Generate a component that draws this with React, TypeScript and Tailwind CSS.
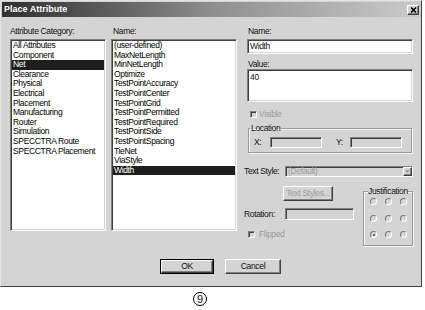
import React from 'react';

const categories = [
  'All Attributes',
  'Component',
  'Net',
  'Clearance',
  'Physical',
  'Electrical',
  'Placement',
  'Manufacturing',
  'Router',
  'Simulation',
  'SPECCTRA Route',
  'SPECCTRA Placement',
];

const attrNames = [
  '(user-defined)',
  'MaxNetLength',
  'MinNetLength',
  'Optimize',
  'TestPointAccuracy',
  'TestPointCenter',
  'TestPointGrid',
  'TestPointPermitted',
  'TestPointRequired',
  'TestPointSide',
  'TestPointSpacing',
  'TieNet',
  'ViaStyle',
  'Width',
];

// sunken / raised win9x edges
const sunken =
  'border border-t-[#808080] border-l-[#808080] border-b-white border-r-white shadow-[inset_1px_1px_0_#404040,inset_-1px_-1px_0_#d4d4d4]';
const raised =
  'border border-t-white border-l-white border-b-[#404040] border-r-[#404040] shadow-[inset_-1px_-1px_0_#808080]';

function ListBox({ items, selected, className }: { items: string[]; selected: string; className: string }) {
  return (
    <div className={`bg-white pt-[1px] px-[1px] ${sunken} ${className}`}>
      {items.map((it) => (
        <div
          key={it}
          className={`h-[9.6px] leading-[9.6px] pl-[1px] whitespace-nowrap ${it === selected ? 'bg-[#1e1e1e] text-white' : 'text-black'}`}
        >
          {it}
        </div>
      ))}
    </div>
  );
}

function CheckBox() {
  return <div className={`w-[7px] h-[7px] bg-[#d4d4d4] ${sunken}`} />;
}

function Radio({ checked }: { checked?: boolean }) {
  return (
    <div className="w-[7px] h-[7px] rounded-full border border-t-[#7a7a7a] border-l-[#7a7a7a] border-b-white border-r-white bg-[#d6d6d6] flex items-center justify-center">
      {checked && <div className="w-[2px] h-[2px] rounded-full bg-[#555]" />}
    </div>
  );
}

export default function App() {
  return (
    <div className="w-[425px] h-[310px] bg-white font-['Liberation_Sans',Arial,sans-serif] text-[8.5px] tracking-[-0.35px] text-[#111] overflow-hidden">
      <div className="w-[422px] h-[287px] bg-[#d4d4d4] border border-t-[#e4e4e4] border-l-[#e4e4e4] border-b-[#404040] border-r-[#404040] flex flex-col">
        {/* title bar */}
        <div className="mx-[1px] mt-[1px] h-[15px] bg-linear-to-r from-[#303030] via-[#8e8e8e] to-[#cbcbcb] flex items-center justify-between pl-[2px] pr-[1px]">
          <span className="text-white font-bold text-[9px] tracking-normal leading-none">Place Attribute</span>
          <div className={`w-[12px] h-[10px] bg-[#d4d4d4] flex items-center justify-center ${raised}`}>
            <svg width="7" height="6" viewBox="0 0 7 6">
              <path d="M1 0.5 L6 5.5 M6 0.5 L1 5.5" stroke="#000" strokeWidth="1.6" />
            </svg>
          </div>
        </div>

        {/* body */}
        <div className="flex pl-[9px] pt-[9px]">
          <div className="w-[96px] flex flex-col">
            <div className="h-[10px] leading-[10px]">Attribute Category:</div>
            <ListBox items={categories} selected="Net" className="mt-[3px] h-[192px]" />
          </div>

          <div className="ml-[5px] w-[126px] flex flex-col">
            <div className="h-[10px] leading-[10px] pl-[2px]">Name:</div>
            <ListBox items={attrNames} selected="Width" className="mt-[3px] h-[192px]" />
          </div>

          <div className="ml-[7px] w-[170px] flex flex-col">
            <div className="h-[10px] leading-[10px] pl-[4px]">Name:</div>
            <div className={`ml-[3px] mt-[3px] w-[166px] h-[15px] bg-white pl-[2px] leading-[13px] ${sunken}`}>Width</div>
            <div className="mt-[5px] h-[10px] leading-[10px] pl-[4px]">Value:</div>
            <div className={`ml-[3px] w-[166px] h-[33px] bg-white pl-[2px] pt-[2px] leading-[10px] ${sunken}`}>40</div>

            <div className="mt-[7px] h-[10px] flex items-center pl-[6px]">
              <CheckBox />
              <span className="ml-[2px] text-[#9c9c9c] leading-[10px]">Visible</span>
            </div>

            <fieldset className="ml-[4px] mt-[4px] w-[164px] border border-[#9a9a9a] shadow-[inset_1px_1px_0_#f4f4f4,1px_1px_0_#f4f4f4] px-[1px] pb-[4px]">
              <legend className="leading-[10px] px-[1px]">Location</legend>
              <div className="flex items-center mt-[4px] h-[11px]">
                <span className="ml-[4px] w-[16px]">X:</span>
                <div className={`w-[52px] h-[11px] bg-[#d4d4d4] ${sunken}`} />
                <span className="ml-[14px] w-[14px]">Y:</span>
                <div className={`w-[52px] h-[11px] bg-[#d4d4d4] ${sunken}`} />
              </div>
            </fieldset>

            <div className="mt-[13px] flex items-center h-[11px]">
              <span className="w-[41px] whitespace-nowrap">Text Style:</span>
              <div className={`w-[128px] h-[11px] bg-[#d4d4d4] flex items-center justify-between ${sunken}`}>
                <span className="pl-[2px] text-[#9c9c9c] leading-none">(Default)</span>
                <div className={`w-[9px] h-[9px] bg-[#d4d4d4] flex items-center justify-center ${raised}`}>
                  <svg width="5" height="3" viewBox="0 0 5 3">
                    <path d="M0 0 H5 L2.5 3 Z" fill="#9a9a9a" />
                  </svg>
                </div>
              </div>
            </div>

            <div className="mt-[9px] flex">
              <div className="w-[119px] flex flex-col">
                <div className={`ml-[39px] w-[50px] h-[15px] bg-[#d4d4d4] flex items-center justify-center text-[#9c9c9c] whitespace-nowrap ${raised}`}>
                  Text Styles...
                </div>
                <div className="mt-[7px] flex items-center h-[12px]">
                  <span className="w-[41px]">Rotation:</span>
                  <div className={`w-[69px] h-[12px] bg-[#d4d4d4] ${sunken}`} />
                </div>
                <div className="mt-[11px] ml-[4px] flex items-center h-[7px]">
                  <CheckBox />
                  <span className="ml-[4px] text-[#9c9c9c] leading-none">Flipped</span>
                </div>
              </div>
              <fieldset className="w-[50px] h-[60px] border border-[#9a9a9a] shadow-[inset_1px_1px_0_#f4f4f4,1px_1px_0_#f4f4f4] px-[4px]">
                <legend className="leading-[10px] px-[0px] whitespace-nowrap">Justification</legend>
                <div className="mt-[2px] ml-[2px] grid grid-cols-[7px_7px_7px] gap-x-[8px] gap-y-[9.5px]">
                  <Radio />
                  <Radio />
                  <Radio />
                  <Radio />
                  <Radio />
                  <Radio />
                  <Radio checked />
                  <Radio />
                  <Radio />
                </div>
              </fieldset>
            </div>
          </div>
        </div>

        {/* buttons */}
        <div className="mt-[13px] flex pl-[159px]">
          <div className="w-[54px] h-[15px] border border-black">
            <div className={`w-full h-full bg-[#d4d4d4] flex items-center justify-center ${raised}`}>OK</div>
          </div>
          <div className={`ml-[11px] w-[56px] h-[15px] bg-[#d4d4d4] flex items-center justify-center ${raised}`}>Cancel</div>
        </div>
      </div>

      <div className="ml-[193px] mt-[5px] w-[14px] h-[14px] rounded-full border-[1.5px] border-black flex items-center justify-center text-[11px] leading-none tracking-normal">
        9
      </div>
    </div>
  );
}
